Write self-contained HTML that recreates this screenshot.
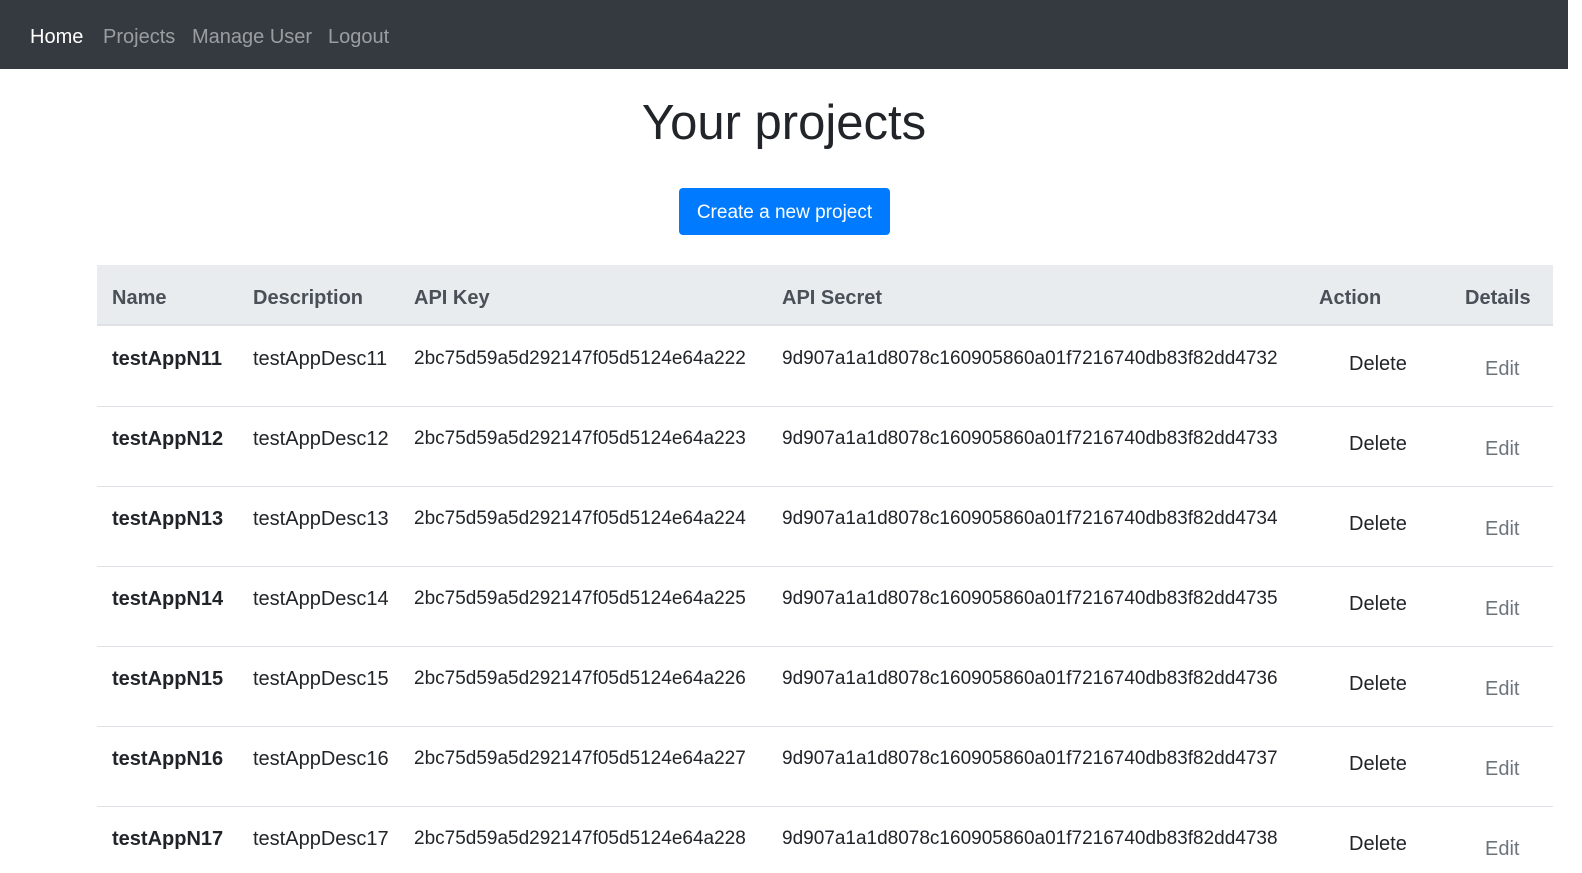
<!DOCTYPE html>
<html><head><meta charset="utf-8"><style>
body{margin:0;width:1582px;height:873px;overflow:hidden;background:#fff;font-family:"Liberation Sans",sans-serif;color:#212529;position:relative}
.nav{position:absolute;left:0;top:0;width:1568px;height:69px;background:#343a40}
.nav span{position:absolute;top:26px;font-size:20px;color:rgba(255,255,255,.5)}
h1{position:absolute;left:0;width:1568px;top:93px;margin:0;text-align:center;font-weight:400;font-size:49px;line-height:60px}
.btn{position:absolute;left:679px;top:188px;width:211px;height:47px;background:#007bff;border-radius:4px;color:#fff;font-size:19px;line-height:50px;text-align:center}
.head{position:absolute;left:97px;top:265px;width:1456px;height:61px;background:#e9ecef;border-bottom:2px solid #dee2e6;box-sizing:border-box}
.c{position:absolute;font-size:20px;white-space:nowrap;line-height:24px}
.hd{font-weight:bold;color:#495057;top:286px}
.k{font-size:19px;left:414px}
.s{font-size:19px;left:782px}
.d{left:1349px}
.e{left:1485px;color:#6c757d}
.line{position:absolute;left:97px;width:1456px;height:1px;background:#dee2e6}
</style></head><body>
<div class="nav"><span style="left:30px;color:#fff">Home</span><span style="left:103px">Projects</span><span style="left:192px">Manage User</span><span style="left:328px">Logout</span></div>
<h1>Your projects</h1>
<div class="btn">Create a new project</div>
<div class="head"></div>
<div class="c hd" style="left:112px">Name</div>
<div class="c hd" style="left:253px">Description</div>
<div class="c hd" style="left:414px">API Key</div>
<div class="c hd" style="left:782px">API Secret</div>
<div class="c hd" style="left:1319px">Action</div>
<div class="c hd" style="left:1465px">Details</div>

<div class="c" style="left:112px;top:347px;font-weight:bold">testAppN11</div><div class="c" style="left:253px;top:347px">testAppDesc11</div><div class="c k" style="top:347px">2bc75d59a5d292147f05d5124e64a222</div><div class="c s" style="top:347px">9d907a1a1d8078c160905860a01f7216740db83f82dd4732</div><div class="c d" style="top:352px">Delete</div><div class="c e" style="top:357px">Edit</div><div class="line" style="top:406px"></div>

<div class="c" style="left:112px;top:427px;font-weight:bold">testAppN12</div><div class="c" style="left:253px;top:427px">testAppDesc12</div><div class="c k" style="top:427px">2bc75d59a5d292147f05d5124e64a223</div><div class="c s" style="top:427px">9d907a1a1d8078c160905860a01f7216740db83f82dd4733</div><div class="c d" style="top:432px">Delete</div><div class="c e" style="top:437px">Edit</div><div class="line" style="top:486px"></div>

<div class="c" style="left:112px;top:507px;font-weight:bold">testAppN13</div><div class="c" style="left:253px;top:507px">testAppDesc13</div><div class="c k" style="top:507px">2bc75d59a5d292147f05d5124e64a224</div><div class="c s" style="top:507px">9d907a1a1d8078c160905860a01f7216740db83f82dd4734</div><div class="c d" style="top:512px">Delete</div><div class="c e" style="top:517px">Edit</div><div class="line" style="top:566px"></div>

<div class="c" style="left:112px;top:587px;font-weight:bold">testAppN14</div><div class="c" style="left:253px;top:587px">testAppDesc14</div><div class="c k" style="top:587px">2bc75d59a5d292147f05d5124e64a225</div><div class="c s" style="top:587px">9d907a1a1d8078c160905860a01f7216740db83f82dd4735</div><div class="c d" style="top:592px">Delete</div><div class="c e" style="top:597px">Edit</div><div class="line" style="top:646px"></div>

<div class="c" style="left:112px;top:667px;font-weight:bold">testAppN15</div><div class="c" style="left:253px;top:667px">testAppDesc15</div><div class="c k" style="top:667px">2bc75d59a5d292147f05d5124e64a226</div><div class="c s" style="top:667px">9d907a1a1d8078c160905860a01f7216740db83f82dd4736</div><div class="c d" style="top:672px">Delete</div><div class="c e" style="top:677px">Edit</div><div class="line" style="top:726px"></div>

<div class="c" style="left:112px;top:747px;font-weight:bold">testAppN16</div><div class="c" style="left:253px;top:747px">testAppDesc16</div><div class="c k" style="top:747px">2bc75d59a5d292147f05d5124e64a227</div><div class="c s" style="top:747px">9d907a1a1d8078c160905860a01f7216740db83f82dd4737</div><div class="c d" style="top:752px">Delete</div><div class="c e" style="top:757px">Edit</div><div class="line" style="top:806px"></div>

<div class="c" style="left:112px;top:827px;font-weight:bold">testAppN17</div><div class="c" style="left:253px;top:827px">testAppDesc17</div><div class="c k" style="top:827px">2bc75d59a5d292147f05d5124e64a228</div><div class="c s" style="top:827px">9d907a1a1d8078c160905860a01f7216740db83f82dd4738</div><div class="c d" style="top:832px">Delete</div><div class="c e" style="top:837px">Edit</div>
</body></html>
